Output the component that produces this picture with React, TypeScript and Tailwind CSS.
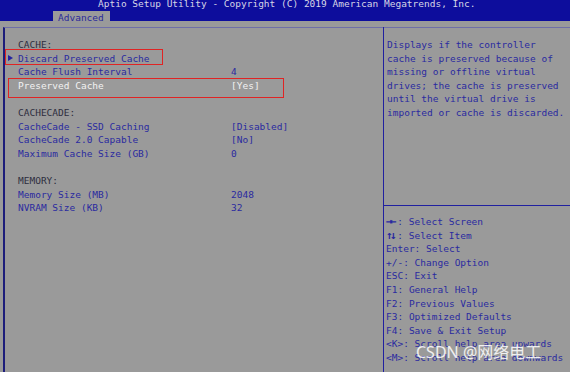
const rows: { label: string; value?: string; kind: 'head' | 'item' | 'sel' | 'blank'; mark?: boolean }[] = [
  { label: 'CACHE:', kind: 'head' },
  { label: 'Discard Preserved Cache', kind: 'item', mark: true },
  { label: 'Cache Flush Interval', value: '4', kind: 'item' },
  { label: 'Preserved Cache', value: '[Yes]', kind: 'sel' },
  { label: '', kind: 'blank' },
  { label: 'CACHECADE:', kind: 'head' },
  { label: 'CacheCade - SSD Caching', value: '[Disabled]', kind: 'item' },
  { label: 'CacheCade 2.0 Capable', value: '[No]', kind: 'item' },
  { label: 'Maximum Cache Size (GB)', value: '0', kind: 'item' },
  { label: '', kind: 'blank' },
  { label: 'MEMORY:', kind: 'head' },
  { label: 'Memory Size (MB)', value: '2048', kind: 'item' },
  { label: 'NVRAM Size (KB)', value: '32', kind: 'item' },
]

const help = [
  'Displays if the controller',
  'cache is preserved because of',
  'missing or offline virtual',
  'drives; the cache is preserved',
  'until the virtual drive is',
  'imported or cache is discarded.',
]

const keys = [
  ['→←', ': Select Screen'],
  ['↑↓', ': Select Item'],
  ['', 'Enter: Select'],
  ['', '+/-: Change Option'],
  ['', 'ESC: Exit'],
  ['', 'F1: General Help'],
  ['', 'F2: Previous Values'],
  ['', 'F3: Optimized Defaults'],
  ['', 'F4: Save & Exit Setup'],
  ['', '<K>: Scroll help area upwards'],
  ['', '<M>: Scroll help area downwards'],
]

export default function App() {
  return (
    <div className="relative w-[570px] h-[372px] overflow-hidden bg-[#9a9a9a] font-['DejaVu_Sans_Mono',monospace] text-[9.5px] leading-[13.6px]">
      {/* header */}
      <div className="h-[24px] bg-[#0d0d9c]">
        <div className="h-[11px] pl-[98px] -mt-[3px] text-[#d6d6e6] leading-[13px] whitespace-pre">
          Aptio Setup Utility - Copyright (C) 2019 American Megatrends, Inc.
        </div>
        <div className="ml-[53px] mt-[3px] w-[57px] h-[13px] bg-[#9a9a9a] text-[#2a2a9a] leading-[14px] pl-[5px]">
          Advanced
        </div>
      </div>

      {/* frame */}
      <div className="mt-[6px] ml-[3px] flex h-[400px] border-l-2 border-t border-[#1d1d7a] border-t-[#6f6fa8]">
        <div className="w-[378px] pt-[10px] pl-[1px]">
          {rows.map((r, i) => (
            <div key={i} className="flex h-[13.6px] whitespace-pre">
              <div className="w-[12px] flex items-center pl-[2px]">
                {r.mark && (
                  <span className="block w-0 h-0 border-y-[3.5px] border-y-transparent border-l-[5px] border-l-[#2323a0]" />
                )}
              </div>
              <div
                className={
                  'w-[213px] ' +
                  (r.kind === 'head' ? 'text-[#2e2e3e]' : r.kind === 'sel' ? 'text-[#f2f2f2]' : 'text-[#2a2aa0]')
                }
              >
                {r.label}
              </div>
              <div className={r.kind === 'sel' ? 'text-[#f2f2f2]' : 'text-[#2a2aa0]'}>{r.value}</div>
            </div>
          ))}
        </div>

        <div className="flex-1 border-l border-[#2020a0] -mt-[1px]">
          <div className="h-[179px] border-b border-[#2020a0] pt-[11px] pl-[3px] text-[#2a2aa0] whitespace-pre">
            {help.map((l) => (
              <div key={l}>{l}</div>
            ))}
          </div>
          <div className="pt-[9px] pl-[2px] text-[#2a2aa0] whitespace-pre">
            {keys.map(([k, t]) => (
              <div key={t} className="h-[13.6px]">
                {k && <span className="font-bold text-[11px] leading-[13.6px] tracking-[-2.5px] pr-[3px]">{k}</span>}
                {t}
              </div>
            ))}
          </div>
        </div>
      </div>

      {/* red annotation boxes */}
      <div className="absolute left-[5px] top-[49px] w-[158px] h-[16px] border border-[#e02424]" />
      <div className="absolute left-[8px] top-[78px] w-[276px] h-[20px] border border-[#e02424]" />

      {/* watermark */}
      <div className="absolute left-[416px] top-[342px] text-[16px] leading-[20px] text-white/85 font-['Noto_Sans','Noto_Sans_CJK_SC',sans-serif] whitespace-pre">
        CSDN @网络电工
      </div>
    </div>
  )
}
